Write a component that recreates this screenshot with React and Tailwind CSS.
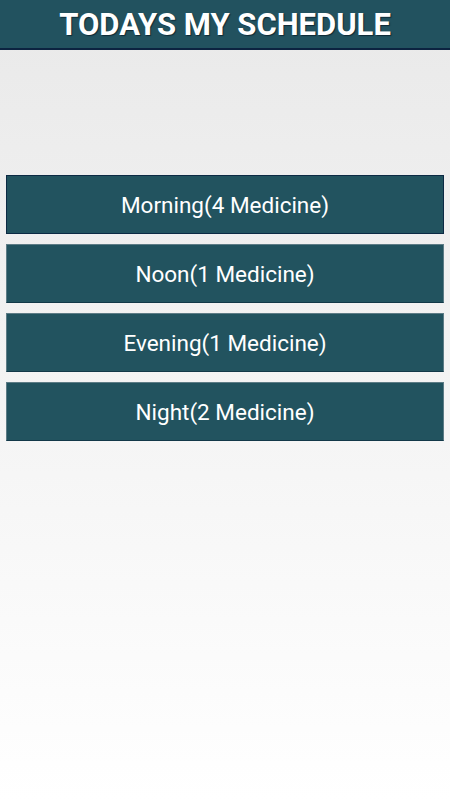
import React from "react";

const slots = [
  "Morning(4 Medicine)",
  "Noon(1 Medicine)",
  "Evening(1 Medicine)",
  "Night(2 Medicine)",
];

export default function App() {
  return (
    <div
      className="w-[450px] h-[800px] flex flex-col bg-gradient-to-b from-[#e9e9e9] to-[#ffffff]"
      style={{ fontFamily: "Roboto, 'Noto Sans', sans-serif" }}
    >
      <header className="h-[50px] shrink-0 bg-[#22525f] border-b-2 border-[#0c2340] flex items-center justify-center">
        <h1 className="text-white font-bold text-[31px] leading-none [text-shadow:1px_1px_1px_#0f2a36]">
          TODAYS MY SCHEDULE
        </h1>
      </header>

      <div className="flex flex-col gap-[10px] px-[6px] pt-[125px]">
        {slots.map((label, i) => (
          <button
            key={label}
            className={`h-[59px] w-full bg-[#22535f] text-white text-[22.5px] pt-[3px] flex items-center justify-center border ${
              i === 0
                ? "border-[#0c2a44]"
                : "border-[#5d7c86] border-b-[#123848]"
            }`}
          >
            {label}
          </button>
        ))}
      </div>
    </div>
  );
}
